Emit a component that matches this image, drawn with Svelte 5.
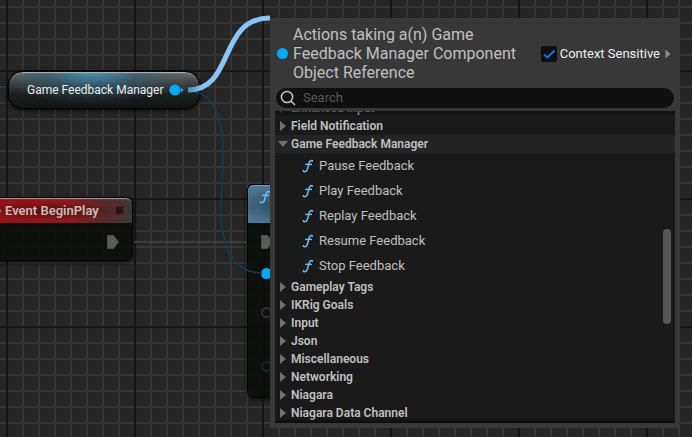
<script>
  let query = $state('');
  let contextSensitive = $state(true);

  const before = ['Enhanced Input', 'Field Notification'];
  const actions = ['Pause Feedback', 'Play Feedback', 'Replay Feedback', 'Resume Feedback', 'Stop Feedback'];
  const after = [
    'Gameplay Tags',
    'IKRig Goals',
    'Input',
    'Json',
    'Miscellaneous',
    'Networking',
    'Niagara',
    'Niagara Data Channel'
  ];
</script>

{#snippet fn()}
  <svg class="fn" viewBox="0 0 12 14" width="12" height="14" aria-hidden="true">
    <path d="M10.6 2.1C10.2 1.2 8.4 1.1 7.6 2.6C6.7 4.4 6.2 8.9 5 11.1C4.1 12.7 2.2 13.2 1.3 12.2" />
    <path d="M3.2 5.4H10" />
    <path class="dot" d="M9.6 1.8h1.4M.8 12h1.4" />
  </svg>
{/snippet}

{#snippet category(name)}
  <button class="category">
    <svg viewBox="0 0 8 12" width="8" height="12" aria-hidden="true"><path d="M1 1L7 6L1 11Z" /></svg>
    {name}
  </button>
{/snippet}

{#snippet execPin()}
  <svg class="exec" viewBox="0 0 12 14" width="12" height="14" aria-hidden="true">
    <path d="M.5 .5H6.5L11.5 7L6.5 13.5H.5Z" />
  </svg>
{/snippet}

<main class="graph">
  <section class="node call">
    <header>{@render fn()}</header>
    <div class="pins">
      {@render execPin()}
      <i class="pin object"></i>
      <i class="pin name"></i>
      <i class="pin struct"></i>
    </div>
  </section>

  <section class="node event">
    <header>
      <svg class="diamond" viewBox="0 0 8 8" width="8" height="8" aria-hidden="true"><path d="M4 0L8 4L4 8L0 4Z" /></svg>
      <span>Event BeginPlay</span>
      <i class="delegate"></i>
    </header>
    <div class="output">{@render execPin()}</div>
  </section>

  <section class="node variable">
    <span>Game Feedback Manager</span>
    <svg viewBox="0 0 15 12" width="15" height="12" aria-hidden="true">
      <circle cx="6" cy="6" r="5.6" />
      <path d="M12 3.5L14.8 6L12 8.5Z" />
    </svg>
  </section>

  <svg class="wires" aria-hidden="true">
    <defs>
      <linearGradient id="drag" gradientUnits="userSpaceOnUse" x1="188" y1="0" x2="202" y2="0">
        <stop offset="0" stop-color="#5c8fb2" />
        <stop offset=".55" stop-color="#6fa5cf" />
        <stop offset="1" stop-color="#8ac4f8" />
      </linearGradient>
    </defs>
    <path d="M134 242H247" stroke="#3c3c3c" stroke-width="2" />
    <path d="M190 91C214 92 223 120 223 150C223 180 221 190 221 213C222 250 235 273 262 273" stroke="#153d52" stroke-width="1.5" />
    <path d="M188 90C235 90 218 18 270 18" stroke="url(#drag)" stroke-width="5" />
  </svg>

  <section class="menu">
    <header>
      <i class="pin object"></i>
      <h1>Actions taking a(n) Game Feedback Manager Component Object Reference</h1>
      <label>
        <span class="check">
          <input type="checkbox" bind:checked={contextSensitive} />
          {#if contextSensitive}
            <svg viewBox="0 0 16 16" aria-hidden="true"><path d="M3 8.5L6.5 11.5L13.5 4.5" /></svg>
          {/if}
        </span>
        Context Sensitive
      </label>
      <button class="more" aria-label="Expand">
        <svg viewBox="0 0 6 10" width="6" height="10"><path d="M.5 .5L5.5 5L.5 9.5Z" /></svg>
      </button>
    </header>

    <div class="search">
      <svg viewBox="0 0 16 16" width="16" height="16" aria-hidden="true">
        <circle cx="7" cy="7" r="5.6" />
        <path d="M11 11L15 15" />
      </svg>
      <input type="text" placeholder="Search" aria-label="Search" bind:value={query} />
    </div>

    <div class="list">
      {#each before as name}{@render category(name)}{/each}
      <button class="category open">
        <svg viewBox="0 0 10 8" width="10" height="8" aria-hidden="true"><path d="M0 1H10L5 7Z" /></svg>
        Game Feedback Manager
      </button>
      {#each actions as name}
        <button class="action">{@render fn()}{name}</button>
      {/each}
      {#each after as name}{@render category(name)}{/each}
      <i class="thumb"></i>
    </div>
  </section>
</main>

<style>
  :global(body) {
    margin: 0;
    background: #262626;
  }
  * {
    box-sizing: border-box;
  }
  svg {
    display: block;
    flex: none;
  }
  button {
    border: 0;
    padding: 0;
    background: none;
    color: inherit;
    font: inherit;
    text-align: left;
  }
  .graph {
    position: relative;
    min-height: 100vh;
    overflow: hidden;
    color: #c0c0c0;
    font: 13px/18px Roboto, sans-serif;
    background-color: #262626;
    background-image:
      linear-gradient(#161616 2px, transparent 2px),
      linear-gradient(90deg, #161616 2px, transparent 2px),
      linear-gradient(#353535 2px, transparent 2px),
      linear-gradient(90deg, #353535 2px, transparent 2px);
    background-size: 128px 128px, 128px 128px, 16px 16px, 16px 16px;
    background-position: 0 70px, 6px 0, 0 6px, 6px 0;
  }
  .wires {
    position: absolute;
    inset: 0;
    width: 100%;
    height: 100%;
    fill: none;
    pointer-events: none;
  }

  .node {
    position: absolute;
    border: 1px solid #030303;
    background: rgba(13, 15, 12, 0.93);
    box-shadow: 0 2px 5px rgba(0, 0, 0, 0.6);
  }
  .exec {
    fill: #5a5a5a;
    stroke: #4c4c4c;
  }
  .pin {
    flex: none;
    width: 11px;
    height: 11px;
    border-radius: 50%;
  }
  .pin.object {
    background: #00a8f5;
  }
  .pin.name {
    border: 2px solid #3b2744;
  }
  .pin.struct {
    border: 2px solid #0b2b2a;
  }

  .variable {
    left: 8px;
    top: 71px;
    display: flex;
    align-items: center;
    gap: 5px;
    width: 192px;
    height: 38px;
    padding-left: 18px;
    border-radius: 15px;
    color: #ececec;
    font-size: 12px;
    background:
      radial-gradient(ellipse 90px 32px at 44% 0, rgba(65, 150, 195, 0.85), rgba(40, 95, 120, 0.5) 50%, transparent),
      linear-gradient(rgba(115, 120, 120, 0.85), rgba(60, 64, 64, 0.85) 36%, rgba(28, 32, 32, 0.88) 60%, rgba(16, 16, 16, 0.9));
    box-shadow: inset 0 2px 1px -1px #b4b8b8, 0 0 0 1px rgba(0, 0, 0, 0.5), 0 2px 5px rgba(0, 0, 0, 0.6);
  }
  .variable svg {
    fill: #00a8f5;
  }

  .event {
    left: -40px;
    top: 197px;
    width: 173px;
    height: 64px;
    border-radius: 7px;
  }
  .event header {
    display: flex;
    align-items: center;
    height: 25px;
    padding: 0 7px 0 33px;
    border-radius: 6px 6px 0 0;
    color: #cbbcbc;
    font-weight: 600;
    background:
      radial-gradient(ellipse 70px 9px at 90px 13px, rgba(30, 8, 8, 0.6), transparent),
      linear-gradient(90deg, #951315 40%, #8c1b1c 65%, #5c2727 82%, #3a3a3a);
    box-shadow: inset 0 2px 1px -1px #a5a5a5;
  }
  .diamond {
    fill: #806060;
  }
  .event header span {
    padding-left: 3px;
  }
  .delegate {
    width: 11px;
    height: 11px;
    margin-left: auto;
    border: 2px solid #652022;
    border-radius: 2px;
    background: #211616;
  }
  .output {
    display: flex;
    justify-content: flex-end;
    padding: 12px 13px 0 0;
  }

  .call {
    left: 247px;
    top: 184px;
    width: 180px;
    height: 214px;
    border-radius: 7px;
  }
  .call header {
    height: 38px;
    padding: 5px 11px;
    border-radius: 6px 6px 0 0;
    background: radial-gradient(ellipse 40px 18px at 28px 20px, #2d4a5c, #4b7693);
    box-shadow: inset 0 1px 1px #7fa5bd;
  }
  .pins {
    display: flex;
    flex-direction: column;
    padding: 12px 13px;
  }
  .pins .object {
    margin-top: 19px;
  }
  .pins .name {
    margin-top: 28px;
  }
  .pins .struct {
    margin-top: 43px;
  }

  .fn {
    fill: none;
    stroke: #6fbcf0;
    stroke-width: 1.5;
  }
  .fn .dot {
    stroke-width: 1.8;
  }

  .menu {
    position: absolute;
    left: 270px;
    right: 12px;
    top: 18px;
    display: flex;
    flex-direction: column;
    padding: 0 5px 5px;
    background: #383838;
  }
  .menu header {
    display: flex;
    align-items: center;
    height: 70px;
    padding: 1px 4px 0 2px;
  }
  h1 {
    flex: 1;
    margin: 0 0 0 5px;
    font-size: 16px;
    font-weight: 400;
    line-height: 19px;
  }
  label {
    display: flex;
    align-items: center;
    gap: 3px;
    color: #f0f0f0;
    white-space: nowrap;
  }
  .check {
    position: relative;
    width: 16px;
    height: 16px;
  }
  .check input {
    appearance: none;
    display: block;
    width: 16px;
    height: 16px;
    margin: 0;
    border-radius: 2px;
    background: #0f0f0f;
  }
  .check svg {
    position: absolute;
    inset: 0;
    fill: none;
    stroke: #0a74e8;
    stroke-width: 2;
    pointer-events: none;
  }
  .more {
    margin-left: 5px;
    fill: #8a8a8a;
  }
  .search {
    display: flex;
    align-items: center;
    gap: 7px;
    height: 20px;
    margin: 0 1px 3px;
    padding-left: 4px;
    border-radius: 10px;
    background: #0f0f0f;
  }
  .search svg {
    fill: none;
    stroke: #c8c8c8;
    stroke-width: 1.5;
  }
  .search input {
    flex: 1;
    min-width: 0;
    border: 0;
    padding: 0;
    outline: 0;
    background: none;
    color: #c0c0c0;
    font: inherit;
  }
  .search input::placeholder {
    color: #585858;
    opacity: 1;
  }

  .list {
    position: relative;
    display: flex;
    flex-direction: column;
    justify-content: flex-end;
    height: 312px;
    padding-bottom: 1px;
    overflow: hidden;
    background: #1a1a1a;
  }
  .list::after {
    content: '';
    position: absolute;
    inset: 0;
    background:
      linear-gradient(rgba(10, 10, 10, 0.6), transparent 6px),
      linear-gradient(0deg, rgba(8, 8, 8, 0.8), transparent 5px);
    pointer-events: none;
  }
  .category,
  .action {
    display: flex;
    flex: none;
    align-items: center;
  }
  .category {
    gap: 4px;
    height: 18px;
    padding-left: 4px;
    font-size: 12px;
    font-weight: 600;
  }
  .category svg {
    fill: #707070;
  }
  .open {
    gap: 3px;
    padding-left: 3px;
    background: #242424;
  }
  .action {
    gap: 5px;
    height: 25px;
    padding-left: 27px;
  }
  .thumb {
    position: absolute;
    right: 4px;
    top: 118px;
    width: 8px;
    height: 95px;
    border-radius: 4px;
    background: #575757;
  }
</style>
